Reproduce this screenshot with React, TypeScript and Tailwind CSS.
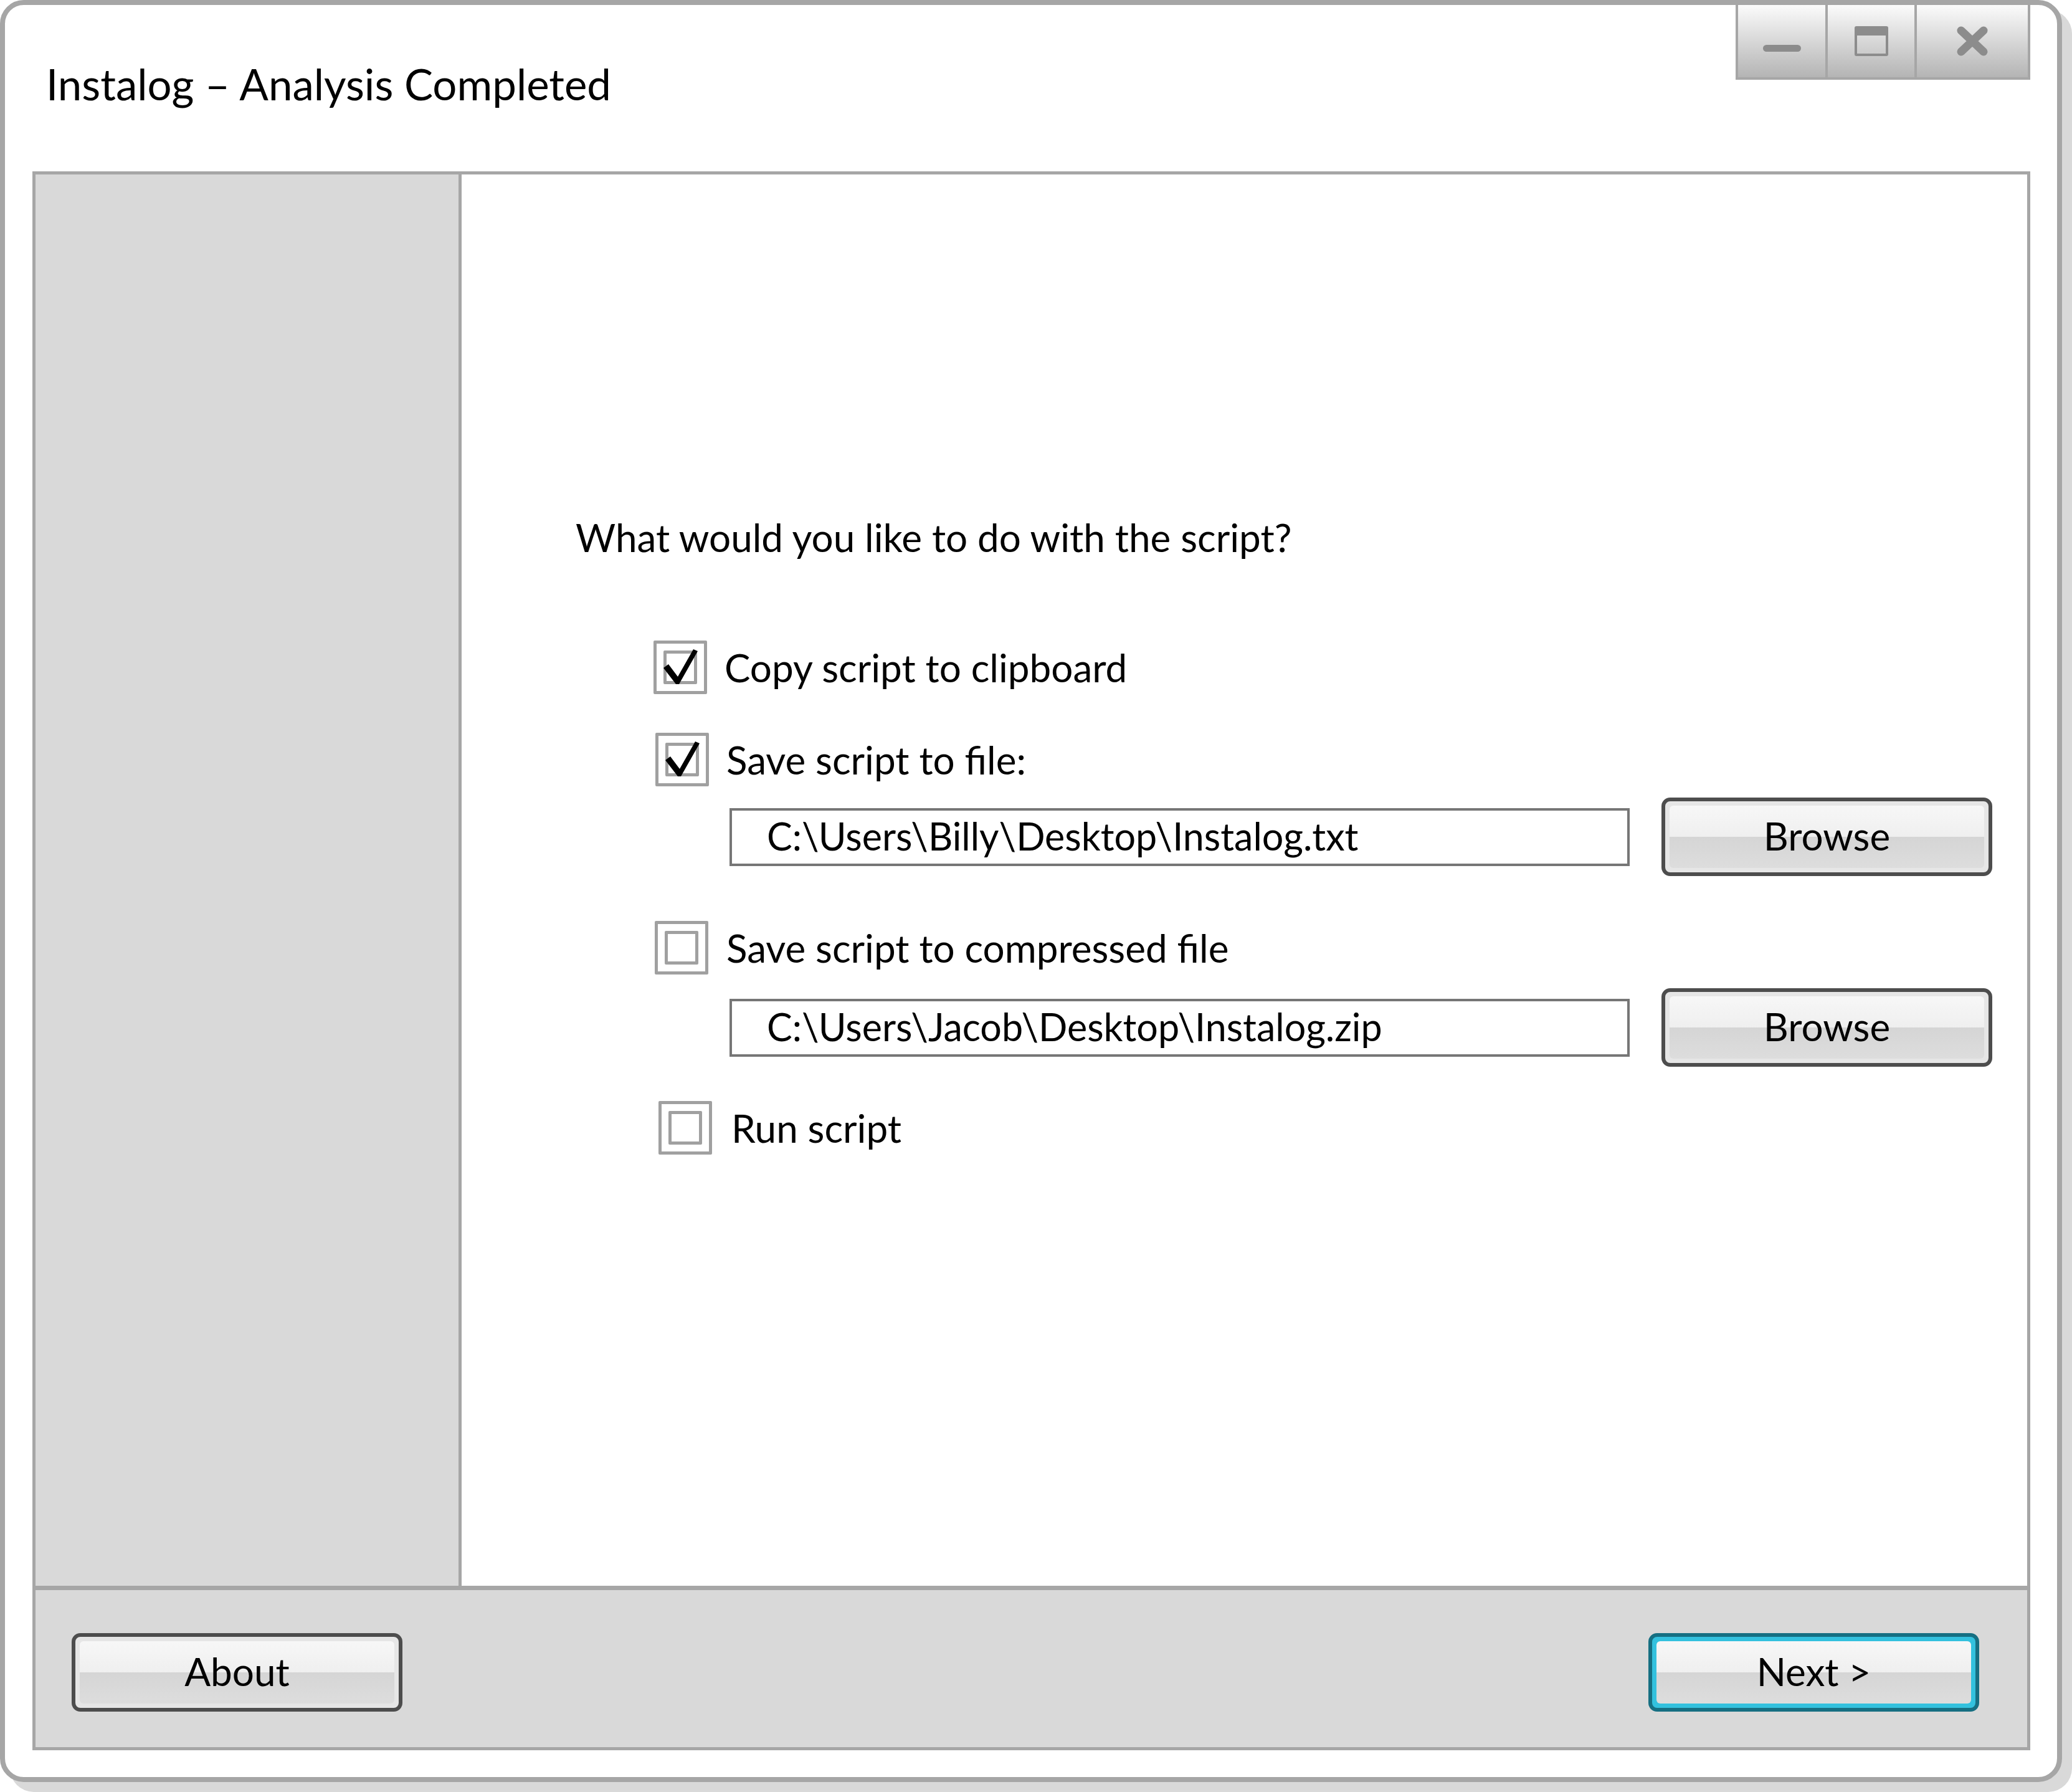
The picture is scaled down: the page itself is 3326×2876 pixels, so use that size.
import React from "react";

// wizard window, last step of the Instalog analysis

const btnFace =
  "h-full w-full rounded-[6px] flex items-center justify-center pb-[4px] text-[62px] leading-none text-black bg-[linear-gradient(to_bottom,#f7f7f7_0%,#efefef_50%,#d5d5d5_50%,#dddddd_100%)]";

const Button = ({ label, primary = false }: { label: string; primary?: boolean }) => {
  return (
    <div
      className={`w-[531px] h-[126px] shrink-0 rounded-[14px] border-[6px] p-[7px] ${
        primary ? "border-[#166f82] bg-[#33c1de]" : "border-[#4d4d4d] bg-[#e6e6e6]"
      }`}
    >
      <div className={btnFace}>{label}</div>
    </div>
  );
};

const Check = ({ checked = false }: { checked?: boolean }) => {
  return (
    <div className="relative w-[86px] h-[86px] shrink-0 border-[5px] border-[#a0a0a0] rounded-[2px] bg-white p-[11px]">
      <div className="w-full h-full border-[5px] border-[#a0a0a0] rounded-[2px]" />
      {checked && (
        <svg className="absolute left-0 top-0" width="76" height="76" viewBox="0 0 76 76">
          <polygon points="11,39 19,33 34,53 59,9 66,12 36,65 31,65" fill="#000" />
        </svg>
      )}
    </div>
  );
};

const PathField = ({ value }: { value: string }) => {
  return (
    <div className="flex items-center ml-[247px]">
      <div className="w-[1445px] h-[93px] border-4 border-[#767676] bg-white flex items-center pl-[56px] pb-[4px] text-[61px] leading-none">
        {value}
      </div>
      <div className="ml-[51px]">
        <Button label="Browse" />
      </div>
    </div>
  );
};

const WindowControls = () => {
  return (
    <div className="flex h-[120px] border-x-4 border-b-4 border-[#a6a6a6] bg-[linear-gradient(to_bottom,#fbfbfb,#b4b4b4)]">
      <div className="w-[140px] flex justify-center pt-[64px]">
        <div className="w-[61px] h-[11px] rounded-full bg-[#8c8c8c]" />
      </div>
      <div className="w-[4px] bg-[#a6a6a6]" />
      <div className="w-[139px] flex justify-center pt-[34px]">
        <div className="w-[54px] h-[48px] rounded-[3px] border-4 border-t-[15px] border-[#8c8c8c]" />
      </div>
      <div className="w-[4px] bg-[#a6a6a6]" />
      <div className="w-[178px] flex justify-center pt-[34px]">
        <svg width="50" height="48" viewBox="0 0 50 48">
          <path d="M7 7 L43 41 M43 7 L7 41" stroke="#8c8c8c" strokeWidth="13" strokeLinecap="round" />
        </svg>
      </div>
    </div>
  );
};

export default function App() {
  return (
    <div className="w-[3326px] h-[2876px] bg-white text-black [font-family:Lato,sans-serif]">
      <div className="w-[3310px] h-[2860px] rounded-[38px] border-8 border-[#a6a6a6] bg-white shadow-[16px_16px_0_0_#d9d9d9] flex flex-col pl-[44px] pr-[43px] pb-[43px]">
        {/* title bar */}
        <div className="h-[267px] shrink-0 flex justify-between items-start">
          <div className="pt-[92px] ml-[22px] text-[69px] leading-none">Instalog – Analysis Completed</div>
          <WindowControls />
        </div>

        {/* main frame */}
        <div className="flex-1 flex flex-col border-[5px] border-[#a6a6a6]">
          <div className="flex-1 flex">
            <div className="w-[684px] shrink-0 bg-[#d9d9d9] border-r-[5px] border-[#a6a6a6]" />
            <div className="flex-1 flex flex-col pl-[183px] text-[62px] leading-none">
              <div className="mt-[551px]">What would you like to do with the script?</div>

              <div className="flex items-center mt-[135px] ml-[125px]">
                <Check checked />
                <span className="ml-[28px]">Copy script to clipboard</span>
              </div>

              <div className="flex items-center mt-[62px] ml-[128px]">
                <Check checked />
                <span className="ml-[28px]">Save script to file:</span>
              </div>

              <div className="mt-[18px]">
                <PathField value={"C:\\Users\\Billy\\Desktop\\Instalog.txt"} />
              </div>

              <div className="flex items-center mt-[72px] ml-[127px]">
                <Check />
                <span className="ml-[29px]">Save script to compressed file</span>
              </div>

              <div className="mt-[22px]">
                <PathField value={"C:\\Users\\Jacob\\Desktop\\Instalog.zip"} />
              </div>

              <div className="flex items-center mt-[55px] ml-[133px]">
                <Check />
                <span className="ml-[31px]">Run script</span>
              </div>
            </div>
          </div>

          {/* footer */}
          <div className="h-[259px] shrink-0 border-t-[7px] border-[#a6a6a6] bg-[#d9d9d9] flex justify-between items-start pt-[69px] pl-[58px] pr-[77px]">
            <Button label="About" />
            <Button label="Next >" primary />
          </div>
        </div>
      </div>
    </div>
  );
}
